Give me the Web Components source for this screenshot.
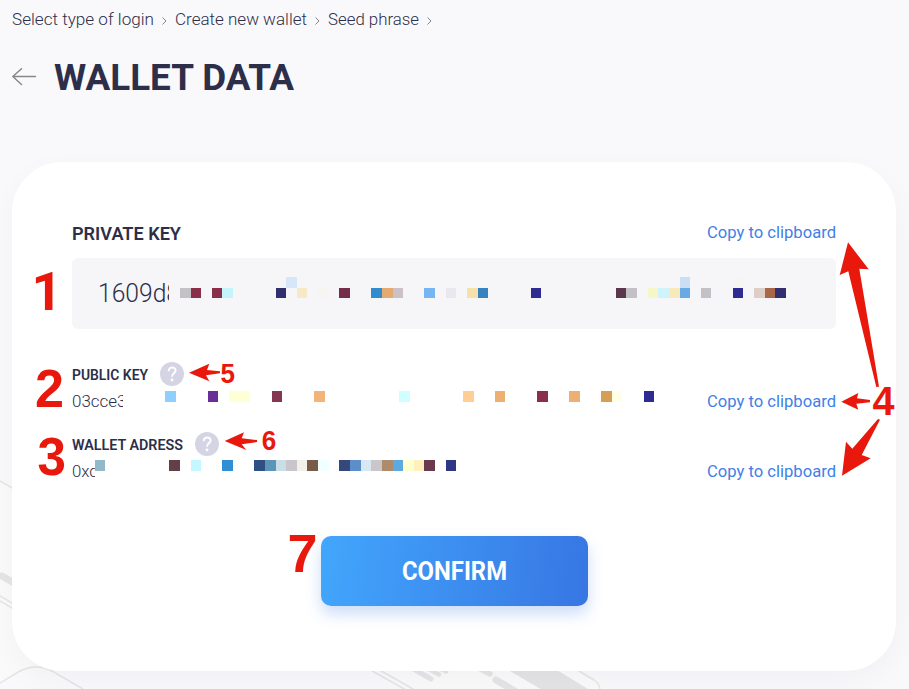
<!DOCTYPE html>
<html lang="en">
<head>
<meta charset="utf-8">
<title>Wallet data</title>
<style>
html,body{margin:0;height:100%;overflow:hidden;background:#f9f9fb}
body{font-family:Roboto,"Liberation Sans",sans-serif;color:#2d2e49}
</style>
</head>
<body>
<wallet-page></wallet-page>
<script>
const define = (name, html, setup) => customElements.define(name, class extends HTMLElement {
  connectedCallback() {
    if (this.shadowRoot) return;
    const t = document.createElement('template');
    t.innerHTML = html;
    this.attachShadow({mode: 'open'}).append(t.content.cloneNode(true));
    if (setup) setup(this, this.shadowRoot);
  }
});

// One line of text, condensed or widened to the width in its "fit" attribute.
define('fit-text', `<style>
:host{display:block;white-space:nowrap;flex:none}
span{display:inline-block;transform-origin:0 50%}
</style><span><slot></slot></span>`, (el, root) => {
  const fit = +el.getAttribute('fit');
  const span = root.querySelector('span');
  el.style.width = (el.getAttribute('clip') || fit) + 'px';
  if (el.hasAttribute('clip')) el.style.overflow = 'hidden';
  span.style.transform = `scaleX(${fit / span.getBoundingClientRect().width})`;
});

define('circuit-backdrop', `<style>
:host{position:absolute;inset:0}svg{display:block}
</style><svg width="909" height="689" fill="none" stroke="#e5e5e6" stroke-width="1.5">
<path d="M0 481L180 585V671H52Q36 663 20 671L0 683Z" fill="#fafafa" stroke="none"/>
<path d="M0 481L30 498.500M0 596L26 611.500M0 601L26 616.500M0 683L20 671Q36 663 52 671L83 689"/>
<path d="M2 576L26 590" stroke-width="7" stroke-linecap="round"/>
<path d="M382 671H579L594 680Q600 684 600 689H414Z" fill="#fafafa" stroke="none"/>
<path d="M367 668L405 689.500M376 668L414 689.500M574 668L594 680Q600 684 600 690"/>
<g stroke-linecap="round"><path d="M410 667L431 679" stroke-width="5"/><path d="M423 666L439 674.500M434 666L446 671.500" stroke-width="4.500"/><path d="M475 666L490 674" stroke-width="5.500"/><path d="M496 680L520 694" stroke-width="7"/></g>
<path d="M510 671H558.500L588 689H540.500Z" fill="#e4e4e5" stroke="none"/>
</svg>`);

define('crumb-trail', `<style>
:host{display:flex;align-items:center;height:24px;padding:8px 0 0 12px;font-size:16.5px;font-weight:300;line-height:24px}
svg{flex:none;margin:1px 8px 0 8px}
</style>
<fit-text fit="142">Select type of login</fit-text><svg width="5" height="8" fill="none" stroke="#85858f"><path d="M.5.5L4 4 .5 7.500"/></svg>
<fit-text fit="132">Create new wallet</fit-text><svg width="5" height="8" fill="none" stroke="#85858f"><path d="M.5.5L4 4 .5 7.500"/></svg>
<fit-text fit="91">Seed phrase</fit-text><svg width="5" height="8" fill="none" stroke="#85858f"><path d="M.5.5L4 4 .5 7.500"/></svg>`);

define('page-heading', `<style>
:host{display:flex;align-items:center;height:48px;padding:21px 0 0 12px;gap:17px}
h1{margin:0;font-size:37.5px;line-height:48px;font-weight:700}svg{flex:none}
</style><svg width="25" height="18" fill="none" stroke="#888" stroke-width="1.500" stroke-linecap="round" stroke-linejoin="round"><path d="M23.500 8.500H.8M9.500.7L.8 8.500L9.500 16.500"/></svg>
<h1><fit-text fit="240"><slot></slot></fit-text></h1>`);

define('copy-link', `<style>
:host{display:block;margin-left:auto;font-size:16.4px;line-height:22px;color:#3f7fe8;font-weight:400}
</style><fit-text fit="129">Copy to clipboard</fit-text>`);

define('help-dot', `<style>:host{display:block;flex:none}svg{display:block}</style>
<svg width="24" height="24"><circle cx="12" cy="12" r="12" fill="#d5d4e4"/><path d="M8.700 9.300C8.700 4.300 15.600 4.300 15.600 8.500C15.600 11.100 12 11.200 12 14.700" fill="none" stroke="#fff" stroke-width="1.900"/><circle cx="12" cy="18" r="1.400" fill="#fff"/></svg>`);

define('private-key', `<style>
:host{display:block}
.head{display:flex;align-items:center;height:24px;font-size:18px;font-weight:600}
.box{margin-top:13px;height:71px;box-sizing:border-box;padding:0 26px;border-radius:6px;background:#f6f6f9;display:flex;align-items:center;font-size:25px;font-weight:300}
copy-link{margin-top:-1px}
</style><div class="head"><fit-text fit="109">PRIVATE KEY</fit-text><copy-link></copy-link></div>
<div class="box"><fit-text fit="82" clip="71">1609d8</fit-text></div>`);

define('key-row', `<style>
:host{display:block;height:52px}
.head{display:flex;align-items:center;height:26px;gap:12px;font-size:14px;font-weight:600}
.value{display:flex;align-items:center;height:28px;font-size:16.5px;font-weight:300}
.head ::slotted(*){padding-top:2px}
copy-link{padding-top:2px}
</style><div class="head"><slot name="label"></slot><help-dot></help-dot></div>
<div class="value"><slot name="value"></slot><copy-link></copy-link></div>`);

define('confirm-button', `<style>
:host{display:block;width:267px}
button{font:700 25px/70px Roboto,sans-serif;color:#fff;width:267px;height:70.5px;padding:3px 0 0;border:0;border-radius:10px;display:flex;justify-content:center;align-items:center;background:linear-gradient(97deg,#42a6fc,#3776e3);box-shadow:0 8px 15px rgba(55,118,227,.25)}
</style><button><fit-text fit="105"><slot></slot></fit-text></button>`);

define('wallet-card', `<style>
:host{display:flex;flex-direction:column;position:relative;box-sizing:border-box;width:884px;height:509.5px;margin:60.5px 0 0 12px;padding:59.5px 60px 0;border-radius:50px;background:#fff;box-shadow:0 10px 30px rgba(40,40,80,.035)}
.public{margin-top:32px}.address{margin-top:18px}
confirm-button{align-self:center;margin-top:52.5px}
</style><private-key></private-key>
<key-row class="public"><fit-text slot="label" fit="76">PUBLIC KEY</fit-text><fit-text slot="value" fit="54.500" clip="51">03cce3</fit-text></key-row>
<key-row class="address"><fit-text slot="label" fit="111">WALLET ADRESS</fit-text><fit-text slot="value" fit="26" clip="23">0xc</fit-text></key-row>
<confirm-button>CONFIRM</confirm-button>`);

// Coloured blocks hiding most of each key: left, right, colour.
define('pixel-mosaic', `<style>:host{position:absolute;inset:0;pointer-events:none}svg{display:block}</style><svg width="909" height="689" shape-rendering="crispEdges"></svg>`, (el, root) => {
  const rows = [
    [277, 288, '286 297 d6e7f9,680 690 cbdff4,733 743 f6f5f2'],
    [288, 298, '180 191 c3c1c6,191 201 8a2f49,212 222 8a2f49,222 233 c4f5fb,276 286 312f6d,297 307 f7e9c6,318 329 f6f5f2,339 350 742e49,371 382 308ccd,382 393 e3aa71,393 403 cbc1c7,424 435 76b4f2,446 456 eae7ee,467 478 f7e1ab,478 488 3683bf,531 541 2e2c92,616 626 5c364a,626 637 c3c1c6,648 658 f6f7c9,658 669 cef3fa,669 680 f7e9b8,680 690 68aae3,701 711 c3c1c6,733 743 2e2c92,754 765 decec6,765 775 a76748,775 786 312f6d'],
    [391, 402, '165 176 8fceff,208 218 6b2d96,229 250 ffffd6,272 282 853751,314 325 f3b577,399 410 d0ffff,463 474 ffce94,495 505 ecb074,537 548 8b2d4c,569 580 ecb074,601 612 d69d54,612 622 ffffe5,644 654 2e2c92'],
    [460, 471, '95 105 93b8ca,169 180 633f48,191 201 c4f7ff,222 233 308fd4,254 265 2e5085,265 276 5d95b8,276 286 cadee8,286 297 c8c6ca,297 307 f3f0e8,307 318 795c47,318 329 f0ffff,339 350 35487c,350 361 5c8ec9,361 371 d7e7f3,371 382 c9c7ca,382 393 ae8b6b,393 403 5daae3,403 414 ffffd0,414 424 fff0bd,424 435 6a394d,446 456 2d3786']
  ];
  root.querySelector('svg').innerHTML = rows.map(([top, bottom, cells]) => cells.split(',').map(c => {
    const [l, r, color] = c.split(' ');
    return `<rect x="${l}" y="${top}" width="${r - l}" height="${bottom - top}" fill="#${color}"/>`;
  }).join('')).join('');
});

define('callout-layer', `<style>
:host{position:absolute;inset:0;pointer-events:none}svg{display:block}
text{font-family:"Liberation Sans",Arial,sans-serif;font-weight:700}
.one{font-family:Roboto,sans-serif}
</style><svg width="909" height="689" fill="#e8190c">
<text class="one" x="31.500" y="310" font-size="53.500">1</text>
<g font-size="54"><text x="35" y="407" textLength="29" lengthAdjust="spacingAndGlyphs">2</text><text x="37.500" y="474.500" textLength="28.500" lengthAdjust="spacingAndGlyphs">3</text><text x="287.500" y="572">7</text></g>
<text x="872.500" y="414.700" font-size="41" textLength="22" lengthAdjust="spacingAndGlyphs">4</text>
<g font-size="27"><text x="220.500" y="382.700" textLength="14.500" lengthAdjust="spacingAndGlyphs">5</text><text x="261.700" y="450.300" textLength="14.500" lengthAdjust="spacingAndGlyphs">6</text></g>
<path d="M848 242.300L868.700 269.300L859.300 268.700L879 386.700L876.300 387L848.300 271.300L839.700 275Z"/>
<path d="M841.300 401.700L858.300 393L857 398.300L870 400V402.300L856.300 403.700L858.300 409.700Z"/>
<path d="M842 475.700L846 441.700L852.300 448.700L878 419L880 419.700L861.700 455L870.700 458.300Z"/>
<path d="M189 372.700L209.300 363.700L207 370L220 371.300V373.300L206 375.300L209.300 381.300Z"/>
<path d="M224.700 441L244 432.300L241.700 438.300L257 440V442L241.700 444.300L246.300 450Z"/>
</svg>`);

define('wallet-page', `<style>
:host{display:block;position:relative;width:909px;height:689px;overflow:hidden;background:#f9f9fb}
main{position:relative;display:flex;flex-direction:column}
</style><circuit-backdrop></circuit-backdrop>
<main><crumb-trail></crumb-trail><page-heading>WALLET DATA</page-heading><wallet-card></wallet-card></main>
<pixel-mosaic></pixel-mosaic><callout-layer></callout-layer>`);
</script>
</body>
</html>
